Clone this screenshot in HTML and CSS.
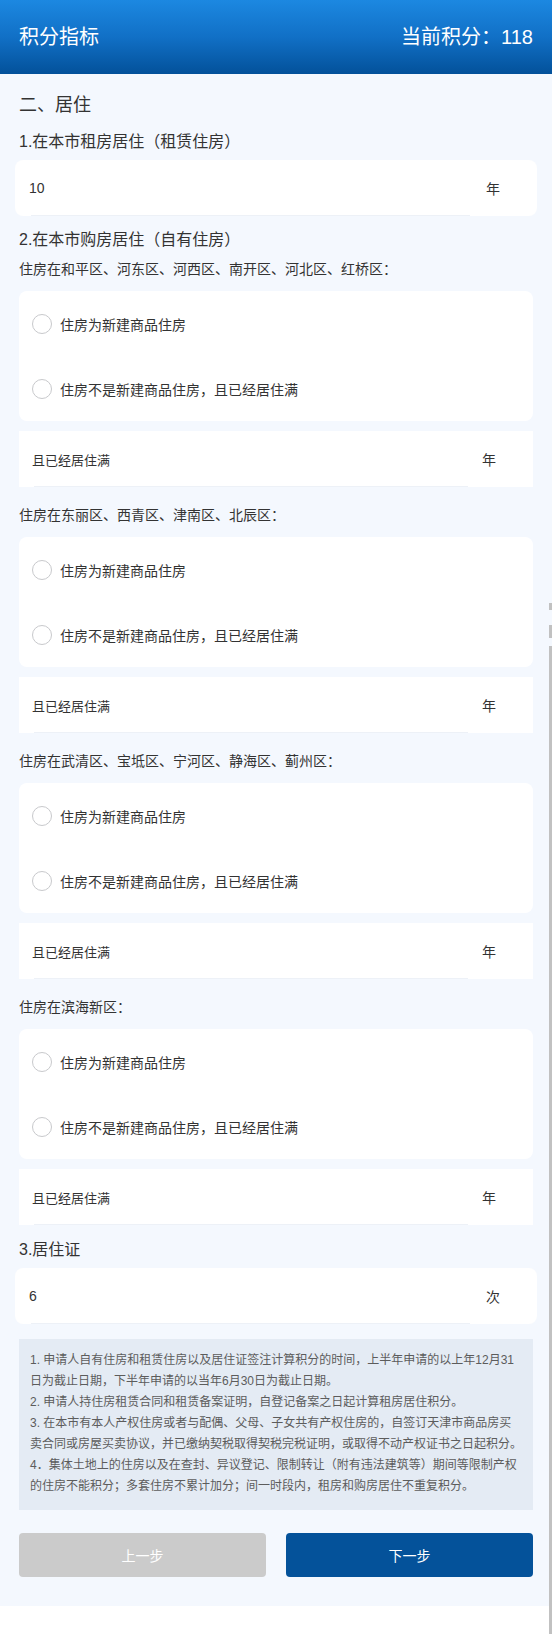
FILE: index.html
```html
<!DOCTYPE html>
<html lang="zh-CN">
<head>
<meta charset="utf-8">
<title>积分指标</title>
<link rel="stylesheet" href="styles.css">
</head>
<body>
<header class="topbar">
  <span class="title">积分指标</span>
  <span class="score">当前积分：118</span>
</header>
<main class="content">
  <h2 class="section-title">二、居住</h2>

  <h3 class="q-title">1.在本市租房居住（租赁住房）</h3>
  <div class="input-card"><span class="value">10</span><span class="unit">年</span></div>

  <h3 class="q-title q-own">2.在本市购房居住（自有住房）</h3>

  <p class="area">住房在和平区、河东区、河西区、南开区、河北区、红桥区：</p>
  <div class="radio-card">
    <div class="radio"><span class="dot"></span><span>住房为新建商品住房</span></div>
    <div class="radio"><span class="dot"></span><span>住房不是新建商品住房，且已经居住满</span></div>
  </div>
  <div class="field-row"><span class="label">且已经居住满</span><span class="unit">年</span></div>

  <p class="area">住房在东丽区、西青区、津南区、北辰区：</p>
  <div class="radio-card">
    <div class="radio"><span class="dot"></span><span>住房为新建商品住房</span></div>
    <div class="radio"><span class="dot"></span><span>住房不是新建商品住房，且已经居住满</span></div>
  </div>
  <div class="field-row"><span class="label">且已经居住满</span><span class="unit">年</span></div>

  <p class="area">住房在武清区、宝坻区、宁河区、静海区、蓟州区：</p>
  <div class="radio-card">
    <div class="radio"><span class="dot"></span><span>住房为新建商品住房</span></div>
    <div class="radio"><span class="dot"></span><span>住房不是新建商品住房，且已经居住满</span></div>
  </div>
  <div class="field-row"><span class="label">且已经居住满</span><span class="unit">年</span></div>

  <p class="area">住房在滨海新区：</p>
  <div class="radio-card">
    <div class="radio"><span class="dot"></span><span>住房为新建商品住房</span></div>
    <div class="radio"><span class="dot"></span><span>住房不是新建商品住房，且已经居住满</span></div>
  </div>
  <div class="field-row"><span class="label">且已经居住满</span><span class="unit">年</span></div>

  <h3 class="q-title q-permit">3.居住证</h3>
  <div class="input-card"><span class="value">6</span><span class="unit">次</span></div>

  <div class="notes">
    <p>1. 申请人自有住房和租赁住房以及居住证签注计算积分的时间，上半年申请的以上年12月31日为截止日期，下半年申请的以当年6月30日为截止日期。</p>
    <p>2. 申请人持住房租赁合同和租赁备案证明，自登记备案之日起计算租房居住积分。</p>
    <p>3. 在本市有本人产权住房或者与配偶、父母、子女共有产权住房的，自签订天津市商品房买卖合同或房屋买卖协议，并已缴纳契税取得契税完税证明，或取得不动产权证书之日起积分。</p>
    <p>4．集体土地上的住房以及在查封、异议登记、限制转让（附有违法建筑等）期间等限制产权的住房不能积分；多套住房不累计加分；间一时段内，租房和购房居住不重复积分。</p>
  </div>

  <div class="actions">
    <button class="btn btn-prev" type="button">上一步</button>
    <button class="btn btn-next" type="button">下一步</button>
  </div>
</main>
<div class="scrollbar"></div>
</body>
</html>
```

FILE: styles.css
```css
html, body {
  margin: 0;
  padding: 0;
}

body {
  position: relative;
  min-height: 1634px;
  background: #ffffff;
  color: #333333;
  font-family: "Liberation Sans", "Noto Sans CJK SC", sans-serif;
}

.topbar {
  height: 74px;
  box-sizing: border-box;
  padding: 0 19px;
  display: flex;
  align-items: center;
  justify-content: space-between;
  background: linear-gradient(180deg, #1c88e1 0%, #1170c6 50%, #03519a 100%);
  color: #ffffff;
  font-size: 20px;
  line-height: 28px;
}

.content {
  background: #f4f8fe;
  padding: 19px 19px 29px;
}

.section-title {
  margin: 0;
  font-size: 18px;
  line-height: 24px;
  font-weight: normal;
  color: #333333;
}

.q-title {
  margin: 14px 0 7px;
  font-size: 16px;
  line-height: 22px;
  font-weight: normal;
  color: #333333;
}

.q-own {
  margin-top: 13px;
}

.q-permit {
  margin-top: 14px;
}

.area {
  margin: 18px 0 12px;
  font-size: 14px;
  line-height: 20px;
  color: #333333;
}

.q-title + .area {
  margin-top: 8px;
}

.input-card {
  height: 56px;
  margin: 0 -4px;
  padding: 0 37px 0 14px;
  box-sizing: border-box;
  display: flex;
  align-items: center;
  justify-content: space-between;
  border-radius: 8px;
  background: linear-gradient(#edf1f7, #edf1f7) no-repeat 16px 100% / 439px 1px, #ffffff;
  font-size: 14px;
  color: #333333;
}

.radio-card {
  background: #ffffff;
  border-radius: 8px;
  margin-bottom: 10px;
}

.radio {
  height: 65px;
  padding-left: 13px;
  display: flex;
  align-items: center;
  gap: 8px;
  font-size: 14px;
  color: #333333;
}

.dot {
  width: 20px;
  height: 20px;
  box-sizing: border-box;
  border: 1px solid #c8c9cc;
  border-radius: 50%;
  background: #ffffff;
  flex: none;
}

.field-row {
  height: 56px;
  padding: 0 37px 0 13px;
  box-sizing: border-box;
  display: flex;
  align-items: center;
  justify-content: space-between;
  background: linear-gradient(#edf1f7, #edf1f7) no-repeat 15px 100% / 434px 1px, #ffffff;
  font-size: 13px;
  color: #333333;
}

.field-row .unit {
  font-size: 14px;
}

.notes {
  margin-top: 15px;
  padding: 11px 10.3px 13px 11px;
  background: #e4ebf4;
  color: #5c5c5c;
  font-size: 12px;
  line-height: 21px;
}

.notes p {
  margin: 0;
}

.actions {
  margin-top: 23px;
  display: flex;
  gap: 20px;
}

.btn {
  flex: 1;
  height: 44px;
  border: none;
  border-radius: 4px;
  color: #ffffff;
  font-family: inherit;
  font-size: 14px;
  padding: 0;
}

.btn-prev {
  background: #cbcbcb;
}

.btn-next {
  background: #04529a;
}

.scrollbar {
  position: absolute;
  right: 0;
  top: 603px;
  width: 3px;
  height: 1031px;
  background: linear-gradient(to bottom,
    #c1c1c1 0 7px,
    transparent 7px 22px,
    #c1c1c1 22px 35px,
    transparent 35px 43px,
    #c1c1c1 43px 100%);
}
```
